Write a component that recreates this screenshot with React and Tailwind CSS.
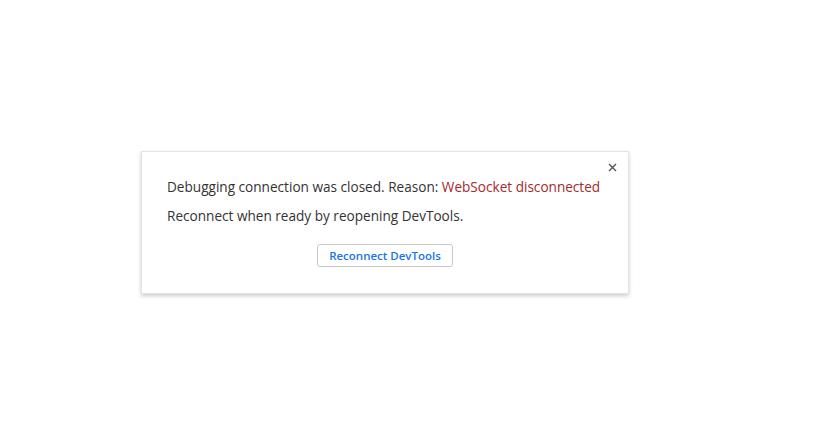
export default function App() {
  return (
    <div
      className="w-[824px] h-[428px] bg-white pl-[141px] pt-[151px]"
      style={{ fontFamily: '"Open Sans", "Noto Sans", sans-serif' }}
    >
      <div className="relative w-[488px] h-[143px] bg-white border border-[#e3e3e3] shadow-[0_2px_4px_rgba(0,0,0,0.2)] pt-[26px] pl-[25px] pr-[10px]">
        <button className="absolute right-[8px] top-[7px] w-4 h-4 flex items-center justify-center text-[#555]">
          <svg width="9" height="9" viewBox="0 0 9 9">
            <path d="M1 1L8 8M8 1L1 8" stroke="#555" strokeWidth="1.4" />
          </svg>
        </button>
        <div className="text-[13.6px] leading-[18px] text-[#333] whitespace-nowrap">
          Debugging connection was closed. Reason:{" "}
          <span className="text-[#a52a2a]">WebSocket disconnected</span>
        </div>
        <div className="text-[13.6px] leading-[18px] text-[#333] mt-[11px] whitespace-nowrap">
          Reconnect when ready by reopening DevTools.
        </div>
        <div className="flex justify-center mt-[19px] pr-[15px]">
          <button className="h-[23px] w-[136px] border border-[#c8c8c8] rounded-[3px] text-[11.5px] font-semibold text-[#1a73e8] bg-white">
            Reconnect DevTools
          </button>
        </div>
      </div>
    </div>
  );
}
